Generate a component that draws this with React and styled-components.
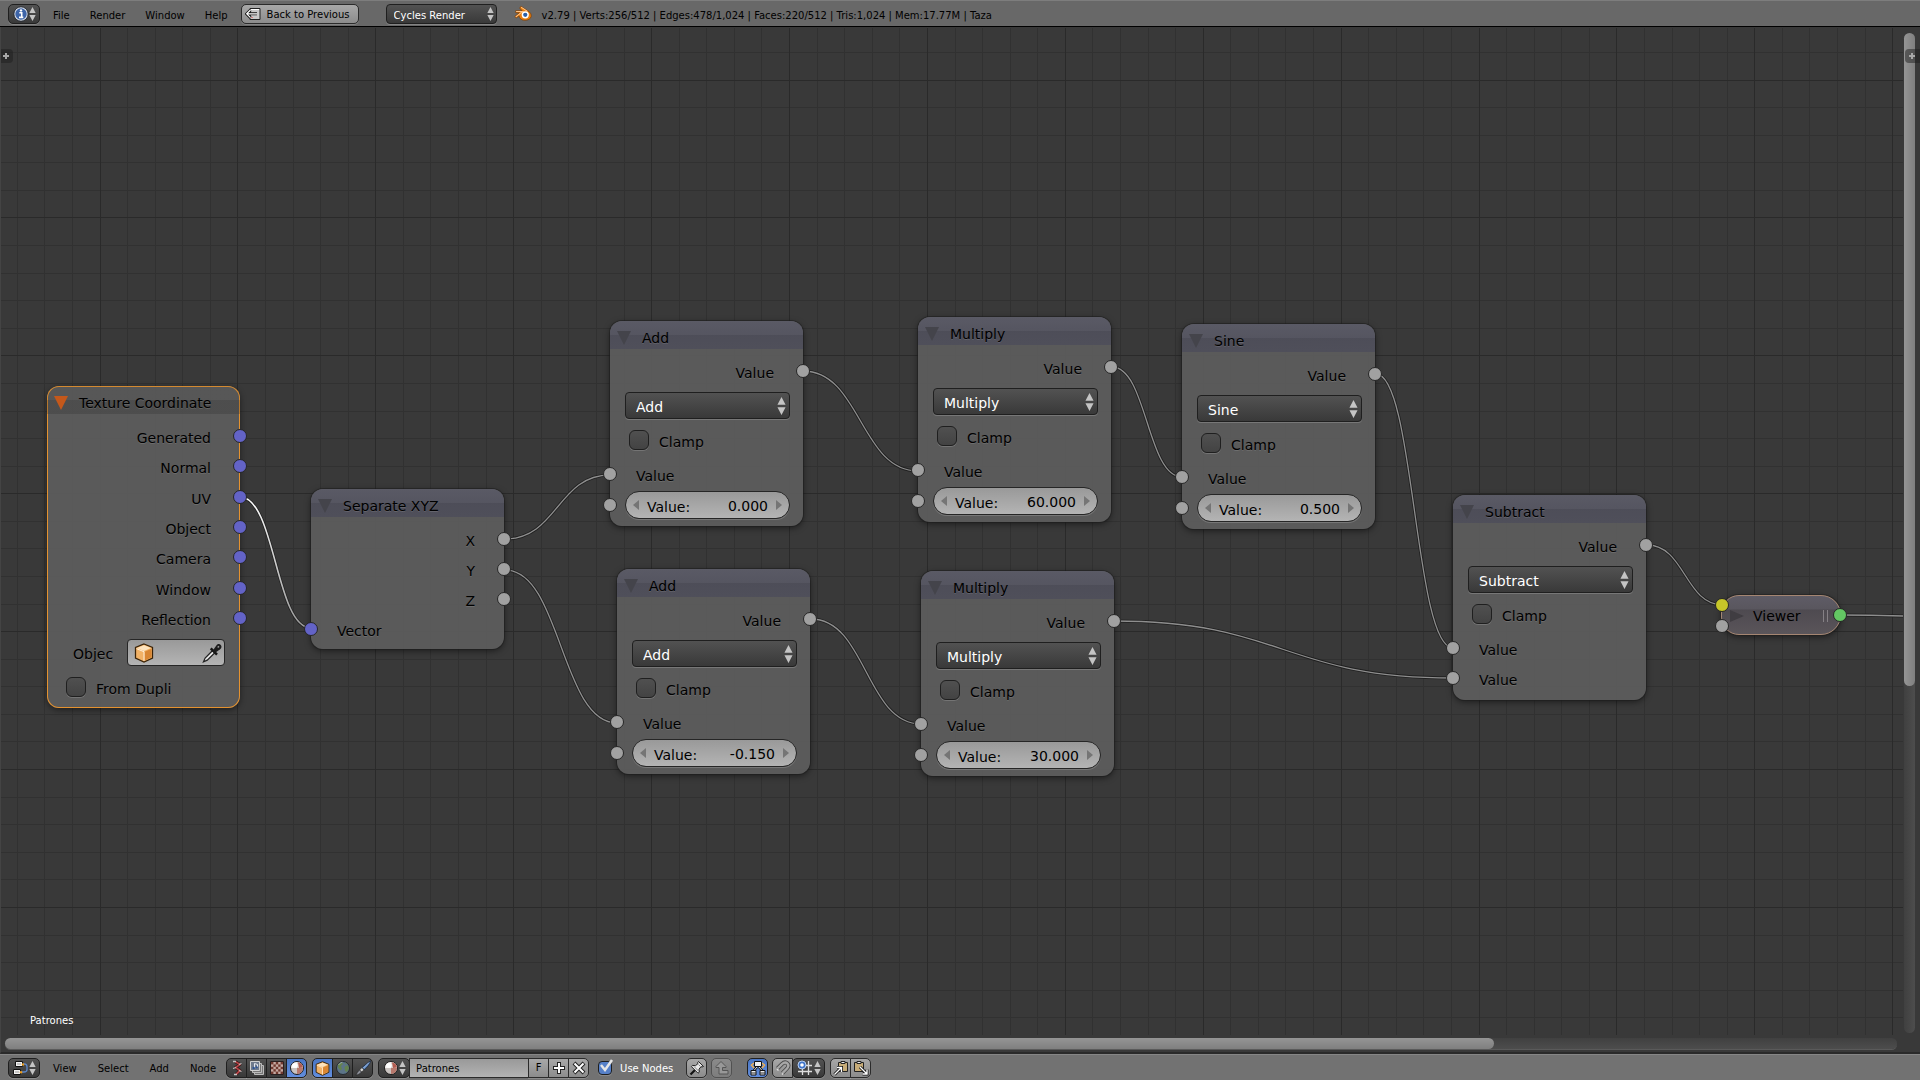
import { useId } from 'react';
import styled, { createGlobalStyle, css } from 'styled-components';

const GlobalStyle = createGlobalStyle`
    *, *::before, *::after {
        box-sizing: border-box;
    }
    body {
        margin: 0;
        background: #393939;
        font-family: "DejaVu Sans", sans-serif;
    }
    button, input, select {
        font: inherit;
        color: inherit;
        margin: 0;
        padding: 0;
        border: 0;
        background: none;
    }
`;

const darkFill = css`
    background: linear-gradient(#525252, #393939);
    border: 1px solid #1f1f1f;
    box-shadow: 0 1px 0 rgba(255, 255, 255, 0.18);
`;

const lightFill = css`
    background: linear-gradient(#a8a8a8, #8c8c8c);
    border: 1px solid #2b2b2b;
    box-shadow: 0 1px 0 rgba(255, 255, 255, 0.18);
`;

const Screen = styled.div`
    display: flex;
    flex-direction: column;
    min-height: 100vh;
    overflow: hidden;
`;

/* ---------- bars ---------- */

const Bar = styled.div`
    display: flex;
    align-items: flex-start;
    height: 26px;
    padding: 3px 8px;
    font-size: 10px;
    line-height: 20px;
    white-space: nowrap;
    color: #000;
    background: #727272;
    border-top: 1px solid #868686;
`;

const InfoBar = styled(Bar).attrs({ as: 'header' })`
    height: 27px;
    background: #686868;
    border-top-color: #7d7d7d;
    border-bottom: 1px solid #000;
`;

const Menu = styled.nav`
    display: flex;
    gap: ${props => props.$wide ? 1 : 0}px;
    margin: 0 ${props => props.$wide ? 0 : 3}px 0 3px;
    padding-top: ${props => props.$wide ? 1 : 2}px;
`;

const MenuItem = styled.button`
    padding: 0 10px;
    line-height: 20px;
`;

const Group = styled.div`
    display: flex;
    margin-left: ${props => props.$gap || 0}px;
    & > * {
        border-radius: 0;
    }
    & > * + * {
        margin-left: -1px;
    }
    & > *:first-child {
        border-top-left-radius: 5px;
        border-bottom-left-radius: 5px;
    }
    & > *:last-child {
        border-top-right-radius: 5px;
        border-bottom-right-radius: 5px;
    }
`;

const EditorButton = styled.button`
    ${darkFill}
    display: flex;
    align-items: center;
    justify-content: space-between;
    width: ${props => props.$width || 32}px;
    height: 20px;
    padding: 0 3px 0 4px;
    border-radius: 5px;
`;

const IconButton = styled.button`
    display: flex;
    align-items: center;
    justify-content: center;
    width: 21px;
    height: 20px;
    ${props => props.$light ? lightFill : darkFill}
    ${props => props.$active && css`
        background: linear-gradient(#4a76c4, #628ede);
    `}
    ${props => props.$faded && css`
        opacity: 0.45;
    `}
`;

const BackButton = styled.button`
    ${lightFill}
    display: flex;
    align-items: center;
    gap: 6px;
    width: 118px;
    height: 20px;
    padding: 2px 3px 0;
    line-height: 18px;
    border-radius: 5px;
    svg {
        margin-top: -2px;
    }
`;

const Stats = styled.p`
    margin: 0 0 0 10px;
    padding-top: 2px;
`;

const IdName = styled.input`
    width: 120px;
    height: 20px;
    padding: 2px 6px 0;
    background: linear-gradient(#999, #b3b3b3);
    border: 1px solid #2b2b2b;
`;

const UseNodes = styled.div`
    position: relative;
    display: flex;
    align-items: center;
    gap: 8px;
    height: 20px;
    margin-left: 9px;
    color: #fff;
    label {
        padding-top: 2px;
    }
    svg {
        position: absolute;
        left: 0;
        top: 0;
        pointer-events: none;
    }
`;

/* ---------- shared controls ---------- */

const SelectWrap = styled.div`
    position: relative;
    margin: ${props => props.$small ? '0 0 0 27px' : '4px 13px 0 15px'};
    width: ${props => props.$small ? '111px' : 'auto'};
    svg {
        position: absolute;
        top: 50%;
        right: ${props => props.$small ? 3 : 4}px;
        transform: translateY(-50%);
        pointer-events: none;
    }
`;

const SelectBox = styled.select`
    ${darkFill}
    display: block;
    appearance: none;
    width: 100%;
    height: ${props => props.$small ? 20 : 27}px;
    padding: ${props => props.$small ? '1px 7px 0' : '2px 10px 0'};
    border-radius: 4px;
    color: #fff;
`;

const Tick = styled.input`
    flex: none;
    appearance: none;
    width: ${props => props.$small ? 14 : 20}px;
    height: ${props => props.$small ? 14 : 20}px;
    border: 1px solid #1f1f1f;
    border-radius: ${props => props.$small ? 4 : 6}px;
    background: linear-gradient(#505050, #434343);
    box-shadow: 0 1px 0 rgba(255, 255, 255, 0.16);
    &:checked {
        background: #5680c8;
    }
`;

/* ---------- node canvas ---------- */

const Canvas = styled.main`
    position: relative;
    flex: 1;
    overflow: hidden;
    background: #393939;
    border-left: 1px solid #444;
    border-bottom: 2px solid #2a2a2a;
`;

const Backdrop = styled.svg`
    position: absolute;
    left: -1px;
    top: 0;
    width: calc(100% - 16px);
    height: calc(100% - 17px);
`;

const Node = styled.section`
    position: absolute;
    left: ${props => props.$x - 1}px;
    top: ${props => props.$y - 27}px;
    width: 193px;
    padding-bottom: ${props => props.$bottom}px;
    font-size: 14px;
    line-height: 18px;
    color: #000;
    text-shadow: 0 1px 0 rgba(255, 255, 255, 0.12);
    white-space: nowrap;
    background: rgba(94, 94, 94, 0.9);
    border-radius: 12px;
    box-shadow: ${props => props.$selected
        ? '0 0 0 1px #e5922f inset, 0 2px 6px rgba(0, 0, 0, 0.45)'
        : '0 0 0 1px rgba(30, 30, 30, 0.55), 0 2px 6px rgba(0, 0, 0, 0.5)'};
`;

const NodeHeader = styled.header`
    display: flex;
    align-items: center;
    gap: 11px;
    height: 28px;
    padding: 5px 8px 0 7px;
    border-radius: 12px 12px 0 0;
    background: ${props => props.$plain
        ? 'linear-gradient(rgba(60, 60, 60, 0.1) 50%, rgba(40, 40, 40, 0.25) 50%)'
        : 'linear-gradient(rgba(90, 90, 105, 0.75), rgba(84, 84, 98, 0.8) 50%, rgba(76, 76, 88, 0.9) 50%, rgba(78, 78, 90, 0.9))'};
    h2 {
        margin: 0;
        font-size: 14px;
        font-weight: normal;
    }
`;

const CollapseButton = styled.button`
    display: flex;
`;

const Rows = styled.div`
    display: flex;
    flex-direction: column;
    justify-content: space-between;
    height: ${props => props.$height ? props.$height + 'px' : 'auto'};
    margin-top: 9px;
`;

const Row = styled.div`
    position: relative;
    height: 30px;
    line-height: 30px;
    padding: 0 29px 0 26px;
    text-align: ${props => props.$out ? 'right' : 'left'};
`;

const socketColors = {
    vector: '#6363c7',
    value: '#a1a1a1',
    color: '#c7c729',
    shader: '#63c763',
};

const Socket = styled.i`
    position: absolute;
    top: ${props => props.$top || 6}px;
    ${props => props.$out ? 'right' : 'left'}: -7px;
    width: 14px;
    height: 14px;
    border: 1px solid #262626;
    border-radius: 50%;
    background: ${props => socketColors[props.$type]};
`;

const CheckRow = styled.div`
    display: flex;
    align-items: center;
    gap: 10px;
    margin: 11px 0 11px 19px;
    height: 20px;
    label {
        padding-top: 3px;
    }
`;

const NumberRow = styled.div`
    position: relative;
    padding: 0 13px 0 15px;
`;

const NumberBox = styled.div`
    display: flex;
    align-items: center;
    justify-content: space-between;
    height: 28px;
    padding: 0 7px;
    border: 1px solid #262626;
    border-radius: 14px;
    background: linear-gradient(#999, #b4b4b4);
    box-shadow: 0 1px 0 rgba(255, 255, 255, 0.18);
    text-shadow: none;
    button {
        display: flex;
    }
    label {
        padding: 3px 0 0 8px;
    }
    input {
        flex: 1;
        width: 40px;
        min-width: 0;
        padding: 2px 8px 0 0;
        text-align: right;
    }
`;

const ObjectRow = styled.div`
    display: flex;
    align-items: center;
    justify-content: space-between;
    margin: 4px 15px 0 26px;
    label {
        padding-top: 2px;
    }
`;

const ObjectField = styled.div`
    display: flex;
    align-items: center;
    width: 98px;
    height: 27px;
    padding: 0 2px 0 6px;
    border: 1px solid #262626;
    border-radius: 4px;
    background: linear-gradient(#999, #b4b4b4);
    input {
        flex: 1;
        min-width: 0;
    }
    svg {
        flex: none;
    }
    button {
        display: flex;
    }
`;

const ViewerNode = styled.section`
    position: absolute;
    left: 1720px;
    top: 568px;
    display: flex;
    align-items: center;
    gap: 9px;
    width: 120px;
    height: 40px;
    padding: 1px 12px 0 8px;
    font-size: 14px;
    border: 1px solid #a58672;
    border-radius: 18px 20px 20px 18px;
    background: linear-gradient(#5f5c66, #59565e 35%, #4e4a50 36%, #5a555a);
    box-shadow: 0 0 0 1px rgba(30, 30, 30, 0.5), 0 2px 6px rgba(0, 0, 0, 0.5);
    h2 {
        flex: 1;
        margin: 0;
        padding-top: 1px;
        font-size: 14px;
        font-weight: normal;
    }
`;

const Grip = styled.span`
    width: 5px;
    height: 12px;
    border: 1px solid #858085;
    border-width: 0 1px;
`;

const TreeName = styled.p`
    position: absolute;
    left: 29px;
    bottom: 21px;
    margin: 0;
    font-size: 10px;
    line-height: 20px;
    color: #fff;
`;

const Track = styled.div`
    position: absolute;
    border-radius: 6px;
    ${props => props.$vertical ? css`
        top: 6px;
        right: 5px;
        bottom: 19px;
        width: 11px;
        background: linear-gradient(90deg, #404040, #4d4d4d);
    ` : css`
        left: 4px;
        right: 23px;
        bottom: 3px;
        height: 11px;
        background: linear-gradient(#404040, #4d4d4d);
        box-shadow: 0 1px 0 #5a5a5a;
    `}
`;

const Thumb = styled.div`
    border-radius: 6px;
    ${props => props.$vertical ? css`
        height: 65.3%;
        background: linear-gradient(90deg, #959595, #7f7f7f);
    ` : css`
        width: 78.7%;
        height: 100%;
        background: linear-gradient(#959595, #7f7f7f);
    `}
`;

const RegionTab = styled.button`
    position: absolute;
    top: 22px;
    ${props => props.$right ? 'right: 0;' : 'left: 0;'}
    display: flex;
    align-items: center;
    justify-content: center;
    width: ${props => props.$right ? 15 : 12}px;
    height: 14px;
    padding-right: 2px;
    border-radius: ${props => props.$right ? '4px 0 0 4px' : '0 4px 4px 0'};
    background: rgba(30, 30, 30, 0.5);
`;

/* ---------- icons ---------- */

const UpDown = ({ large }) => (
    <svg width={large ? 9 : 7} height={large ? 18 : 14} viewBox="0 0 8 16" preserveAspectRatio="none">
        <path d="M4 0 7.6 6.8H.4zM4 16 .4 9.2h7.2z" fill="#c4c4c4" />
    </svg>
);

const Triangle = ({ color, right }) => (
    <svg width="14" height="14" viewBox="0 0 14 14">
        <path d={right ? 'M0 1 14 7 0 13z' : 'M0 0h14L7 14z'} fill={color} />
    </svg>
);

const Arrow = ({ left }) => (
    <svg width="6" height="10" viewBox="0 0 6 10">
        <path d={left ? 'M6 0v10L0 5z' : 'M0 0v10L6 5z'} fill="#757575" />
    </svg>
);

const PlusSmall = () => (
    <svg width="8" height="8" viewBox="0 0 8 8">
        <path d="M4 1v6M1 4h6" stroke="#a8a8a8" strokeWidth="2" />
    </svg>
);

const Icon = ({ children, size = 16 }) => (
    <svg width={size} height={size} viewBox="0 0 16 16" fill="none">{children}</svg>
);

const InfoIcon = () => (
    <Icon>
        <circle cx="8" cy="8" r="6.3" fill="#3d64a8" stroke="#d8dde6" strokeWidth="1.2" />
        <circle cx="8" cy="8" r="7.2" stroke="#1d2430" strokeWidth=".7" />
        <path d="M6.3 6.8h2.4v4.4M6 11.4h4.3" stroke="#fff" strokeWidth="1.6" />
        <circle cx="8" cy="4.4" r="1.2" fill="#fff" />
    </Icon>
);

const BackIcon = () => (
    <Icon>
        <path d="M5 2.5h10v11H5z" fill="#c9c9c9" stroke="#222" />
        <path d="M6 3.5h8" stroke="#fff" />
        <path d="M12 7.8H2.2M5.5 4 1.7 7.8l3.8 3.8" stroke="#111" strokeWidth="3" />
        <path d="M12 7.8H2.2M5.5 4 1.7 7.8l3.8 3.8" stroke="#fff" strokeWidth="1.2" />
        <path d="M6.5 11.5h1" stroke="#d33" />
    </Icon>
);

const BlenderIcon = () => (
    <Icon>
        <path d="M6.2 2.1 12.5 6.2c2.2 1.4 3.2 3.2 2.7 5.1-.5 2-2.7 3.2-5.4 3.2-3 0-5.2-1.6-5.3-4L2 12.4.8 11l4-3.2H1.6V6h5.6L5 3.6z" fill="#e87d0d" stroke="#7a3c05" strokeWidth=".6" />
        <path d="M6.3 2.8 12 6.6M1.9 6.6h5.8L1.6 11.5" stroke="#ffc58a" strokeWidth=".9" />
        <circle cx="10" cy="9.6" r="3.2" fill="#fff" />
        <circle cx="10" cy="9.6" r="1.9" fill="#2b5fa8" />
    </Icon>
);

const NodeTreeIcon = () => (
    <Icon>
        <path d="M9 4h2.5c2 0 2.5 1 2.5 3v2.5c0 2-1 2.5-3 2.5H8" stroke="#5c86c8" strokeWidth="1.3" />
        <path d="M2.5 1.5h7v5h-7zM.5 9.5h7v5h-7z" fill="#f0f0f0" stroke="#111" />
        <path d="M4 4h4M2 12h4" stroke="#999" />
        <circle cx="10" cy="4.5" r="1.2" fill="#e89a1c" />
        <circle cx="8" cy="12.3" r="1.2" fill="#e89a1c" />
    </Icon>
);

const CurvyIcon = () => (
    <Icon>
        <path d="M6 1.5 11 4.500 6.500 7.500 11 10.500 7 14.500" stroke="#2a1010" strokeWidth="3" strokeLinejoin="round" />
        <path d="M6 1.5 11 4.500 6.500 7.500 11 10.500 7 14.500" stroke="#b54548" strokeWidth="1.8" strokeLinejoin="round" />
        <path d="M4 1.500h3M10 4.500 12.500 3.500M4 8.500l3-1M10 10.500l2.500 1M5 14.500h3" stroke="#c4c4c4" strokeWidth="1.3" />
    </Icon>
);

const CompositeIcon = () => (
    <Icon>
        <path d="M5.5 5.5h9v9h-9z" fill="#777" stroke="#bbb" />
        <path d="M3.5 3.5h9v9h-9z" fill="#777" stroke="#bbb" />
        <path d="M1.5 1.5h9v9h-9z" fill="#6f7a8c" stroke="#d0d0d0" />
        <path d="M5.5 8V3.5l3 1V7" stroke="#e4e8f0" />
        <circle cx="4.7" cy="8" r="1.2" fill="#2e5596" />
        <circle cx="7.7" cy="7.3" r="1.1" fill="#2e5596" />
    </Icon>
);

const checks = [...Array(25).keys()].filter(i => i % 2 === 0);

const CheckerIcon = () => (
    <Icon>
        <path d="M1.5 1.5h13v13h-13z" fill="#c4a8a0" stroke="#2a2020" />
        {checks.map(i => (
            <rect key={i} x={2 + (i % 5) * 2.4} y={2 + Math.floor(i / 5) * 2.4} width="2.4" height="2.4" fill="#70392f" />
        ))}
    </Icon>
);

const MaterialIcon = () => (
    <Icon>
        <circle cx="8" cy="8" r="6.5" fill="#c9c3c0" stroke="#1c1c1c" />
        <path d="M8 2a6 6 0 0 0-6 6h6z" fill="#f4f2f0" />
        <path d="M8 8h6a6 6 0 0 1-6 6z" fill="#b8786c" />
        <path d="M8 2a6 6 0 0 1 6 6H8z" fill="#d8d0cc" />
        <path d="M9 2.200a6 6 0 0 1 4.900 5.300L10 8z" fill="#b35c50" />
        <ellipse cx="6" cy="5.5" rx="2.8" ry="2.3" fill="#fff" />
    </Icon>
);

const CubeIcon = ({ size = 16 }) => (
    <Icon size={size}>
        <path d="M8 .8 14.8 3.5v8.5L8 15.3 1.2 12V3.5z" fill="#f2b266" stroke="#3a2308" />
        <path d="m8 1.8 5.6 2.1L8 6.4 2.4 3.9z" fill="#fde3bd" />
        <path d="M8.5 7 14 4.6v6.8l-5.5 2.7z" fill="#d98632" />
        <path d="M2 4.5 8 7v7.3" stroke="#fff0dc" strokeWidth=".8" />
    </Icon>
);

const WorldIcon = () => (
    <Icon>
        <circle cx="8" cy="8" r="6.5" fill="#5c7488" stroke="#252a2e" />
        <path d="M3 4.5 6.5 2l1.5 2-2 2 1 3-1.500 1.500L3 7.5zM9.5 7l3-2 1.5 3-2 4-2-1zM10 2.5l2 1-1.500 1z" fill="#64824f" />
        <path d="M3.5 5a6 6 0 0 1 4-2.8" stroke="#a3b4bf" strokeWidth=".8" />
    </Icon>
);

const BrushIcon = () => (
    <Icon>
        <path d="M15.5.8 7 7.500 9 10c3-2.500 6-5.500 6.500-9.200z" fill="#5f86bd" stroke="#1c2c44" strokeWidth=".8" />
        <path d="M14 2.500 8.500 8" stroke="#a4c0e6" strokeWidth=".9" />
        <path d="m7 7.500 2 2.500-2.500 2-2-2z" fill="#d4d4d4" stroke="#222" strokeWidth=".6" />
        <path d="m4.500 10 2 2C5 14 3 14.800.8 15.200 2 13.500 2.500 11.500 4.500 10z" fill="#8d9099" stroke="#222" strokeWidth=".6" />
    </Icon>
);

const PlusIcon = () => (
    <Icon>
        <path d="M8 2v12M2 8h12" stroke="#222" strokeWidth="4" />
        <path d="M8 3v10M3 8h10" stroke="#fff" strokeWidth="2" />
    </Icon>
);

const CrossIcon = () => (
    <Icon>
        <path d="m3 3 10 10M13 3 3 13" stroke="#222" strokeWidth="4" />
        <path d="m3.5 3.5 9 9M12.5 3.5l-9 9" stroke="#fff" strokeWidth="2" />
    </Icon>
);

const PinIcon = () => (
    <Icon>
        <path d="M7 9 1.5 14.5" stroke="#111" strokeWidth="2.2" />
        <path d="M9.5 1.5 14.5 6.5l-1.500.5-1-.3-2 2.5.3 3-1.300 1-6.500-6.500 1-1.300 3 .3L9 3.5 8.8 2.3z" fill="#e8e8e8" stroke="#222" />
        <path d="m5 6.5 4.5 4.5M9.5 4.5 11.5 6.5" stroke="#888" />
    </Icon>
);

const ParentIcon = () => (
    <Icon>
        <path d="M7 1.5 2 6.5v1h3v6.5h9v-3.500H8.5v-3H12v-1z" fill="#c8c8c8" stroke="#333" />
    </Icon>
);

const AutoRenderIcon = () => (
    <Icon>
        <path d="M4 3 1.5 5 4 8M12 3l2.5 2L12 8" stroke="#f0b050" strokeWidth="1.5" />
        <path d="M4.5 1.5h7v5h-7z" fill="#eee" stroke="#111" />
        <path d="M7 7 3.5 11M9 7l3.5 4" stroke="#111" strokeWidth="2.5" />
        <path d="M7 7 3.5 11M9 7l3.5 4" stroke="#ddd" />
        <path d="M1 10.5h5V15H1zM10 10.5h5V15h-5z" fill="#eee" stroke="#111" />
        <path d="M1 13h5M10 13h5" stroke="#333" />
    </Icon>
);

const MagnetIcon = () => (
    <Icon>
        <path d="M2.5 8.5 7 4c4-3.800 8.500.5 5 4.5l-4.500 4.700" stroke="#4a4a4a" strokeWidth="4" />
        <path d="M2.5 8.5 7 4c4-3.800 8.500.5 5 4.5l-4.500 4.700" stroke="#a8a8a8" strokeWidth="2.4" />
        <path d="M2 9 3.5 10.5M7 13.5 8 14.5" stroke="#e0e0e0" strokeWidth="1.5" />
    </Icon>
);

const SnapGridIcon = () => (
    <Icon>
        <path d="M5.5 6v9M11.5 1v14M1 11.5h14M8 5.5h7" stroke="#ddd" strokeWidth="1.3" />
        <circle cx="5" cy="5" r="4" fill="#3f74c8" stroke="#b9d0f2" />
        <circle cx="5" cy="5" r="1.8" fill="#fff" />
    </Icon>
);

const ClipboardIcon = ({ paste }) => (
    <Icon>
        <path d={paste ? 'M1.5 2.5h9v9h-9z' : 'M5.5 2.5h9v9h-9z'} fill="#c7ac78" stroke="#222" />
        <path d={paste ? 'M4 1.5h4v2H4z' : 'M8 1.5h4v2H8z'} fill="#eee" stroke="#222" />
        <path d={paste ? 'm7 7 7 7M14 9.5V14H9.5' : 'm1.5 14.5 7-7M4 7.5h4.5V12'} stroke="#111" strokeWidth="3" />
        <path d={paste ? 'm7 7 7 7M14 9.5V14H9.5' : 'm1.5 14.5 7-7M4 7.5h4.5V12'} stroke="#fff" strokeWidth="1.4" />
    </Icon>
);

const DropperIcon = () => (
    <Icon size={20}>
        <path d="M8.500 6 2.5 12 1.2 15 4.200 13.700 10.300 7.800z" fill="#e8e8e8" stroke="#222" strokeWidth="1" />
        <path d="m7 4.300 5 5" stroke="#151515" strokeWidth="2" />
        <path d="M8.500 6.200 11.500 2c1.100-1.400 2.600-1.400 3.500-.5s.8 2.400-.5 3.500L10.300 8z" fill="#1c1c1c" />
        <path d="M12.500 3.5 13.7 2.7" stroke="#999" />
    </Icon>
);

/* ---------- grid and wires ---------- */

const GRID = 27.58;
const columns = [...Array(140).keys()].map(i => ({ at: Math.round(-10.8 + GRID * i), major: i % 5 === 4 }));
const rows = [...Array(80).keys()].map(i => ({ at: Math.round(-2.6 + GRID * i), major: i % 5 === 2 }));

// start x/y, end x/y in screen coordinates
const wires = [
    [505, 539, 610, 475],
    [505, 570, 617, 723],
    [803, 371, 918, 471],
    [1112, 367, 1182, 477],
    [811, 619, 921, 724],
    [1376, 374, 1453, 648],
    [1114, 621, 1453, 678],
    [1647, 545, 1723, 605],
    [1839, 615, 2060, 621],
];

const wirePath = ([x1, y1, x2, y2]) => {
    const bend = (x2 - x1) / 2;
    return `M${x1} ${y1 - 27}C${x1 + bend} ${y1 - 27} ${x2 - bend} ${y2 - 27} ${x2} ${y2 - 27}`;
};

const Wires = () => (
    <Backdrop aria-hidden="true">
        <defs>
            <linearGradient id="activeWire" x1="0" y1="0" x2="0" y2="1">
                <stop offset="0" stopColor="#fff" />
                <stop offset="1" stopColor="#999" />
            </linearGradient>
        </defs>
        {[false, true].map(major => (
            <g key={String(major)} fill={major ? '#2a2a2a' : '#313131'}>
                {columns.filter(line => line.major === major).map(line => (
                    <rect key={line.at} x={line.at} y="1" width="1" height="100%" />
                ))}
                {rows.filter(line => line.major === major).map(line => (
                    <rect key={line.at} x="0" y={line.at} width="100%" height="1" />
                ))}
            </g>
        ))}
        <g fill="none">
            {wires.map(wire => (
                <g key={wire.join()}>
                    <path d={wirePath(wire)} stroke="#1f1f1f" strokeWidth="3" />
                    <path d={wirePath(wire)} stroke="#8e8e8e" strokeWidth="1.3" />
                </g>
            ))}
            <path d={wirePath([240, 497, 311, 628])} stroke="#1f1f1f" strokeWidth="3" />
            <path d={wirePath([240, 497, 311, 628])} stroke="url(#activeWire)" strokeWidth="1.6" />
        </g>
    </Backdrop>
);

/* ---------- nodes ---------- */

const Title = ({ children, active }) => (
    <NodeHeader $plain={active}>
        <CollapseButton aria-label="Collapse node">
            <Triangle color={active ? '#c4581b' : '#44444b'} />
        </CollapseButton>
        <h2>{children}</h2>
    </NodeHeader>
);

const Check = ({ label }) => {
    const id = useId();
    return (
        <CheckRow>
            <Tick type="checkbox" id={id} />
            <label htmlFor={id}>{label}</label>
        </CheckRow>
    );
};

const NumberField = ({ value }) => {
    const id = useId();
    return (
        <NumberRow>
            <Socket $type="value" $top={7} />
            <NumberBox>
                <button aria-label="Decrease"><Arrow left /></button>
                <label htmlFor={id}>Value:</label>
                <input id={id} defaultValue={value} />
                <button aria-label="Increase"><Arrow /></button>
            </NumberBox>
        </NumberRow>
    );
};

const MathNode = ({ x, y, operation, value }) => (
    <Node $x={x} $y={y} $bottom={value ? 7 : 5}>
        <Title>{operation}</Title>
        <Rows>
            <Row $out>Value<Socket $type="value" $out /></Row>
            <SelectWrap>
                <SelectBox aria-label="Operation" defaultValue={operation}>
                    <option>{operation}</option>
                </SelectBox>
                <UpDown large />
            </SelectWrap>
            <Check label="Clamp" />
            <Row>Value<Socket $type="value" /></Row>
            {value ? <NumberField value={value} /> : <Row>Value<Socket $type="value" /></Row>}
        </Rows>
    </Node>
);

const mathNodes = [
    { x: 610, y: 321, operation: 'Add', value: '0.000' },
    { x: 918, y: 317, operation: 'Multiply', value: '60.000' },
    { x: 1182, y: 324, operation: 'Sine', value: '0.500' },
    { x: 617, y: 569, operation: 'Add', value: '-0.150' },
    { x: 921, y: 571, operation: 'Multiply', value: '30.000' },
    { x: 1453, y: 495, operation: 'Subtract' },
];

const coordinates = ['Generated', 'Normal', 'UV', 'Object', 'Camera', 'Window', 'Reflection'];

const TextureNode = () => (
    <Node $x={47} $y={386} $bottom={0} $selected>
        <Title active>Texture Coordinate</Title>
        <Rows $height={212}>
            {coordinates.map(name => (
                <Row key={name} $out>{name}<Socket $type="vector" $out /></Row>
            ))}
        </Rows>
        <ObjectRow>
            <label htmlFor="object">Objec</label>
            <ObjectField>
                <CubeIcon size={20} />
                <input id="object" />
                <button aria-label="Pick object"><DropperIcon /></button>
            </ObjectField>
        </ObjectRow>
        <Check label="From Dupli" />
    </Node>
);

const SeparateNode = () => (
    <Node $x={311} $y={489} $bottom={3}>
        <Title>Separate XYZ</Title>
        <Rows>
            {['X', 'Y', 'Z'].map(axis => (
                <Row key={axis} $out>{axis}<Socket $type="value" $out /></Row>
            ))}
            <Row>Vector<Socket $type="vector" /></Row>
        </Rows>
    </Node>
);

const Viewer = () => (
    <ViewerNode>
        <CollapseButton aria-label="Expand node"><Triangle right color="#403d42" /></CollapseButton>
        <h2>Viewer</h2>
        <Grip />
        <Socket $type="color" $top={2} />
        <Socket $type="value" $top={23} />
        <Socket $type="shader" $top={12} $out />
    </ViewerNode>
);

const App = () => {
    return (
        <>
            <GlobalStyle />
            <Screen>
                <InfoBar>
                    <EditorButton aria-label="Editor type"><InfoIcon /><UpDown /></EditorButton>
                    <Menu>
                        {['File', 'Render', 'Window', 'Help'].map(item => (
                            <MenuItem key={item}>{item}</MenuItem>
                        ))}
                    </Menu>
                    <BackButton><BackIcon />Back to Previous</BackButton>
                    <SelectWrap $small>
                        <SelectBox $small aria-label="Render engine">
                            <option>Cycles Render</option>
                        </SelectBox>
                        <UpDown />
                    </SelectWrap>
                    <Group $gap={17}><Icon size={18}><BlenderIcon /></Icon></Group>
                    <Stats>v2.79 | Verts:256/512 | Edges:478/1,024 | Faces:220/512 | Tris:1,024 | Mem:17.77M | Taza</Stats>
                </InfoBar>

                <Canvas>
                    <Wires />
                    <TextureNode />
                    <SeparateNode />
                    {mathNodes.map(node => <MathNode key={node.x} {...node} />)}
                    <Viewer />
                    <TreeName>Patrones</TreeName>
                    <Track $vertical><Thumb $vertical /></Track>
                    <Track><Thumb /></Track>
                    <RegionTab aria-label="Show tools"><PlusSmall /></RegionTab>
                    <RegionTab $right aria-label="Show properties"><PlusSmall /></RegionTab>
                </Canvas>

                <Bar as="footer">
                    <EditorButton aria-label="Editor type"><NodeTreeIcon /><UpDown /></EditorButton>
                    <Menu $wide>
                        {['View', 'Select', 'Add', 'Node'].map(item => (
                            <MenuItem key={item}>{item}</MenuItem>
                        ))}
                    </Menu>
                    <Group>
                        <IconButton aria-label="Lightmap tree"><CurvyIcon /></IconButton>
                        <IconButton aria-label="Compositing"><CompositeIcon /></IconButton>
                        <IconButton aria-label="Texture"><CheckerIcon /></IconButton>
                        <IconButton aria-label="Shader" $active><MaterialIcon /></IconButton>
                    </Group>
                    <Group $gap={5}>
                        <IconButton aria-label="Object" $active><CubeIcon size={15} /></IconButton>
                        <IconButton aria-label="World"><WorldIcon /></IconButton>
                        <IconButton aria-label="Line style"><BrushIcon /></IconButton>
                    </Group>
                    <Group $gap={5}>
                        <EditorButton aria-label="Browse material"><MaterialIcon /><UpDown /></EditorButton>
                        <IdName aria-label="Material name" defaultValue="Patrones" />
                        <IconButton $light aria-label="Fake user">F</IconButton>
                        <IconButton $light aria-label="New"><PlusIcon /></IconButton>
                        <IconButton $light aria-label="Unlink"><CrossIcon /></IconButton>
                    </Group>
                    <UseNodes>
                        <Tick $small type="checkbox" id="useNodes" defaultChecked />
                        <svg width="16" height="16" viewBox="0 0 16 16" fill="none">
                            <path d="m3 7 4 5 7-10" stroke="#e6e6e6" strokeWidth="2.5" />
                        </svg>
                        <label htmlFor="useNodes">Use Nodes</label>
                    </UseNodes>
                    <Group $gap={13}>
                        <IconButton $light aria-label="Pin"><PinIcon /></IconButton>
                    </Group>
                    <Group $gap={4}>
                        <IconButton $light $faded aria-label="Parent tree"><ParentIcon /></IconButton>
                    </Group>
                    <Group $gap={15}>
                        <IconButton $active aria-label="Auto offset"><AutoRenderIcon /></IconButton>
                    </Group>
                    <Group $gap={4}>
                        <IconButton $light aria-label="Snap"><MagnetIcon /></IconButton>
                        <EditorButton aria-label="Snap element" $width={33}><SnapGridIcon /><UpDown /></EditorButton>
                    </Group>
                    <Group $gap={5}>
                        <IconButton $light aria-label="Copy"><ClipboardIcon /></IconButton>
                        <IconButton $light aria-label="Paste"><ClipboardIcon paste /></IconButton>
                    </Group>
                </Bar>
            </Screen>
        </>
    );
};

export default App;
